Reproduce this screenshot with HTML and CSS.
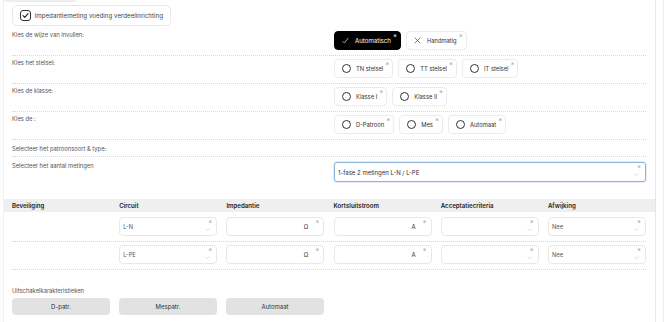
FILE: index.html
```html
<!DOCTYPE html>
<html lang="nl">
<head>
    <meta charset="UTF-8">
    <meta name="viewport" content="width=device-width, initial-scale=1.0">
    <title>Impedantiemeting</title>
    <link rel="stylesheet" href="styles.css">
</head>
<body>
    <div class="page">
        <div class="panel">
            <div class="prev-tab"></div>
            <div class="section">
                <label class="check-card">
                    <span class="check-box">
                        <svg width="7" height="7" viewBox="0 0 10 10"><path d="M1.5 5.2 L4 7.6 L8.6 2.4" fill="none" stroke="#222" stroke-width="1.6" stroke-linecap="round" stroke-linejoin="round"/></svg>
                    </span>
                    Impedantiemeting voeding verdeelinrichting
                </label>

                <div class="row">
                    <div class="row-label">Kies de wijze van invullen:</div>
                    <div class="options">
                        <span class="chip chip-active">
                            <svg class="chip-icon" width="7" height="7" viewBox="0 0 10 10"><path d="M0.8 6 L3.4 8.6 L9.2 1.2" fill="none" stroke="#fff" stroke-width="0.9"/></svg>
                            Automatisch<span class="req">*</span>
                        </span>
                        <span class="chip">
                            <svg class="chip-icon" width="7" height="7" viewBox="0 0 10 10"><path d="M1 1 L9 9 M9 1 L1 9" fill="none" stroke="#333" stroke-width="0.9"/></svg>
                            Handmatig<span class="req">*</span>
                        </span>
                    </div>
                </div>

                <div class="row">
                    <div class="row-label">Kies het stelsel:</div>
                    <div class="options">
                        <span class="chip"><span class="radio"></span>TN stelsel<span class="req">*</span></span>
                        <span class="chip"><span class="radio"></span>TT stelsel<span class="req">*</span></span>
                        <span class="chip"><span class="radio"></span>IT stelsel<span class="req">*</span></span>
                    </div>
                </div>

                <div class="row">
                    <div class="row-label">Kies de klasse:</div>
                    <div class="options">
                        <span class="chip"><span class="radio"></span>Klasse I<span class="req">*</span></span>
                        <span class="chip"><span class="radio"></span>Klasse II<span class="req">*</span></span>
                    </div>
                </div>

                <div class="row">
                    <div class="row-label">Kies de :</div>
                    <div class="options">
                        <span class="chip"><span class="radio"></span>D-Patroon<span class="req">*</span></span>
                        <span class="chip"><span class="radio"></span>Mes<span class="req">*</span></span>
                        <span class="chip"><span class="radio"></span>Automaat<span class="req">*</span></span>
                    </div>
                </div>

                <div class="row row-plain">
                    <div class="row-label">Selecteer het patroonsoort &amp; type:</div>
                </div>

                <div class="row row-last">
                    <div class="row-label">Selecteer het aantal metingen</div>
                    <div class="select">
                        1-fase 2 metingen L-N / L-PE
                        <span class="field-req">*</span>
                        <svg class="chevron" width="5" height="3" viewBox="0 0 10 6"><path d="M1 1 L5 5 L9 1" fill="none" stroke="#bbb" stroke-width="1"/></svg>
                    </div>
                </div>
            </div>

            <div class="table-head">
                <div>Beveiliging</div>
                <div>Circuit</div>
                <div>Impedantie</div>
                <div>Kortsluitstroom</div>
                <div>Acceptatiecriteria</div>
                <div>Afwijking</div>
            </div>

            <div class="table-body">
                <div class="table-row">
                    <div></div>
                    <div class="field">L-N<span class="field-req">*</span><svg class="chevron" width="5" height="3" viewBox="0 0 10 6"><path d="M1 1 L5 5 L9 1" fill="none" stroke="#bbb" stroke-width="1"/></svg></div>
                    <div class="field"><span class="unit">&Omega;</span><span class="field-req">*</span></div>
                    <div class="field"><span class="unit">A</span><span class="field-req">*</span></div>
                    <div class="field"><span class="field-req">*</span><svg class="chevron" width="5" height="3" viewBox="0 0 10 6"><path d="M1 1 L5 5 L9 1" fill="none" stroke="#bbb" stroke-width="1"/></svg></div>
                    <div class="field">Nee<span class="field-req">*</span><svg class="chevron" width="5" height="3" viewBox="0 0 10 6"><path d="M1 1 L5 5 L9 1" fill="none" stroke="#bbb" stroke-width="1"/></svg></div>
                </div>
                <div class="table-row">
                    <div></div>
                    <div class="field">L-PE<span class="field-req">*</span><svg class="chevron" width="5" height="3" viewBox="0 0 10 6"><path d="M1 1 L5 5 L9 1" fill="none" stroke="#bbb" stroke-width="1"/></svg></div>
                    <div class="field"><span class="unit">&Omega;</span><span class="field-req">*</span></div>
                    <div class="field"><span class="unit">A</span><span class="field-req">*</span></div>
                    <div class="field"><span class="field-req">*</span><svg class="chevron" width="5" height="3" viewBox="0 0 10 6"><path d="M1 1 L5 5 L9 1" fill="none" stroke="#bbb" stroke-width="1"/></svg></div>
                    <div class="field">Nee<span class="field-req">*</span><svg class="chevron" width="5" height="3" viewBox="0 0 10 6"><path d="M1 1 L5 5 L9 1" fill="none" stroke="#bbb" stroke-width="1"/></svg></div>
                </div>
            </div>

            <div class="section">
                <div class="section-label">Uitschakelkarakteristieken</div>
                <div class="btn-row">
                    <button class="btn">D-patr.</button>
                    <button class="btn">Mespatr.</button>
                    <button class="btn">Automaat</button>
                </div>
            </div>
        </div>
        <div class="side"></div>
    </div>
</body>
</html>
```

FILE: styles.css
```css
body {
    margin: 0;
    font-family: "Inter", "Liberation Sans", sans-serif;
    background-color: #fff;
    color: #444;
}
.page {
    display: flex;
    height: 322px;
    overflow: hidden;
}
.panel {
    box-sizing: border-box;
    width: 653px;
    margin-left: 3px;
    border-left: 1px solid #f0f0f0;
    border-right: 1px solid #e6e6e6;
}
.side {
    width: 7px;
    border-right: 1px solid #ededed;
}
.prev-tab {
    width: 72px;
    height: 2px;
    background-color: #eee;
    border-radius: 0 0 4px 4px;
}
.section {
    padding: 0 9px 0 8px;
}
.check-card {
    display: inline-flex;
    align-items: center;
    box-sizing: border-box;
    width: 159px;
    height: 21px;
    margin: 3px 0 2px;
    padding: 0 7px;
    border: 1px solid #e8e8e8;
    border-radius: 5px;
    font-size: 6.2px;
    color: #444;
    white-space: nowrap;
}
.check-box {
    display: flex;
    align-items: center;
    justify-content: center;
    box-sizing: border-box;
    width: 11px;
    height: 11px;
    margin-right: 4px;
    border: 1px solid #333;
    border-radius: 3px;
}
.row {
    display: flex;
    padding: 3px 0 5px;
    border-bottom: 1px dotted #d6d6d6;
}
.row-plain {
    padding: 5px 0 3px;
}
.row-last {
    padding: 5px 0 0;
    border-bottom: none;
}
.row-label {
    width: 322px;
    flex-shrink: 0;
    font-size: 5.8px;
    line-height: 8px;
    color: #555;
}
.options {
    display: flex;
    gap: 5px;
}
.chip {
    display: flex;
    align-items: center;
    box-sizing: border-box;
    height: 19px;
    padding: 0 3px 0 7px;
    border: 1px solid #ebebeb;
    border-radius: 4px;
    background-color: #fff;
    font-size: 5.8px;
    color: #333;
    white-space: nowrap;
}
.chip-active {
    background-color: #000;
    border-color: #000;
    color: #fff;
    font-size: 6.1px;
}
.chip-icon {
    margin-right: 6px;
}
.radio {
    box-sizing: border-box;
    width: 9px;
    height: 9px;
    margin-right: 5px;
    border: 1px solid #333;
    border-radius: 50%;
}
.req {
    align-self: flex-start;
    margin: 0 0 0 2px;
    font-size: 8px;
    line-height: 10px;
    color: #b0b0b0;
}
.chip-active .req {
    color: #ddd;
}
.select {
    position: relative;
    display: flex;
    align-items: center;
    box-sizing: border-box;
    width: 312px;
    height: 20px;
    padding: 0 3px;
    border: 1px solid #8fb4da;
    border-radius: 3px;
    box-shadow: 0 0 0 1px #e3edf7;
    font-size: 6px;
    color: #333;
}
.field-req {
    position: absolute;
    top: 0;
    right: 4px;
    font-size: 8px;
    line-height: 10px;
    color: #b0b0b0;
}
.chevron {
    position: absolute;
    top: 10px;
    right: 6px;
}
.table-head {
    display: grid;
    grid-template-columns: repeat(6, 107.2px);
    align-items: center;
    height: 13px;
    margin-top: 17px;
    padding-left: 8px;
    background-color: #efefef;
    font-size: 6.1px;
    font-weight: 600;
    color: #222;
}
.table-body {
    margin: 2px 9px 0 8px;
}
.table-row {
    display: grid;
    grid-template-columns: repeat(6, 107.2px);
    padding: 3px 0 5px;
    border-bottom: 1px dotted #d6d6d6;
}
.field {
    position: relative;
    display: flex;
    align-items: center;
    box-sizing: border-box;
    width: 98px;
    height: 19px;
    padding: 0 15px 0 3px;
    border: 1px solid #e8e8e8;
    border-radius: 4px;
    font-size: 5.8px;
    color: #555;
}
.unit {
    margin-left: auto;
    font-size: 6px;
    color: #333;
}
.section-label {
    margin-top: 17px;
    font-size: 5.8px;
    line-height: 8px;
    color: #555;
}
.btn-row {
    display: flex;
    gap: 9px;
    margin-top: 3px;
}
.btn {
    width: 98px;
    height: 17px;
    padding: 0;
    border: none;
    border-radius: 4px;
    background-color: #e2e2e2;
    font-family: inherit;
    font-size: 6px;
    color: #333;
}
```
